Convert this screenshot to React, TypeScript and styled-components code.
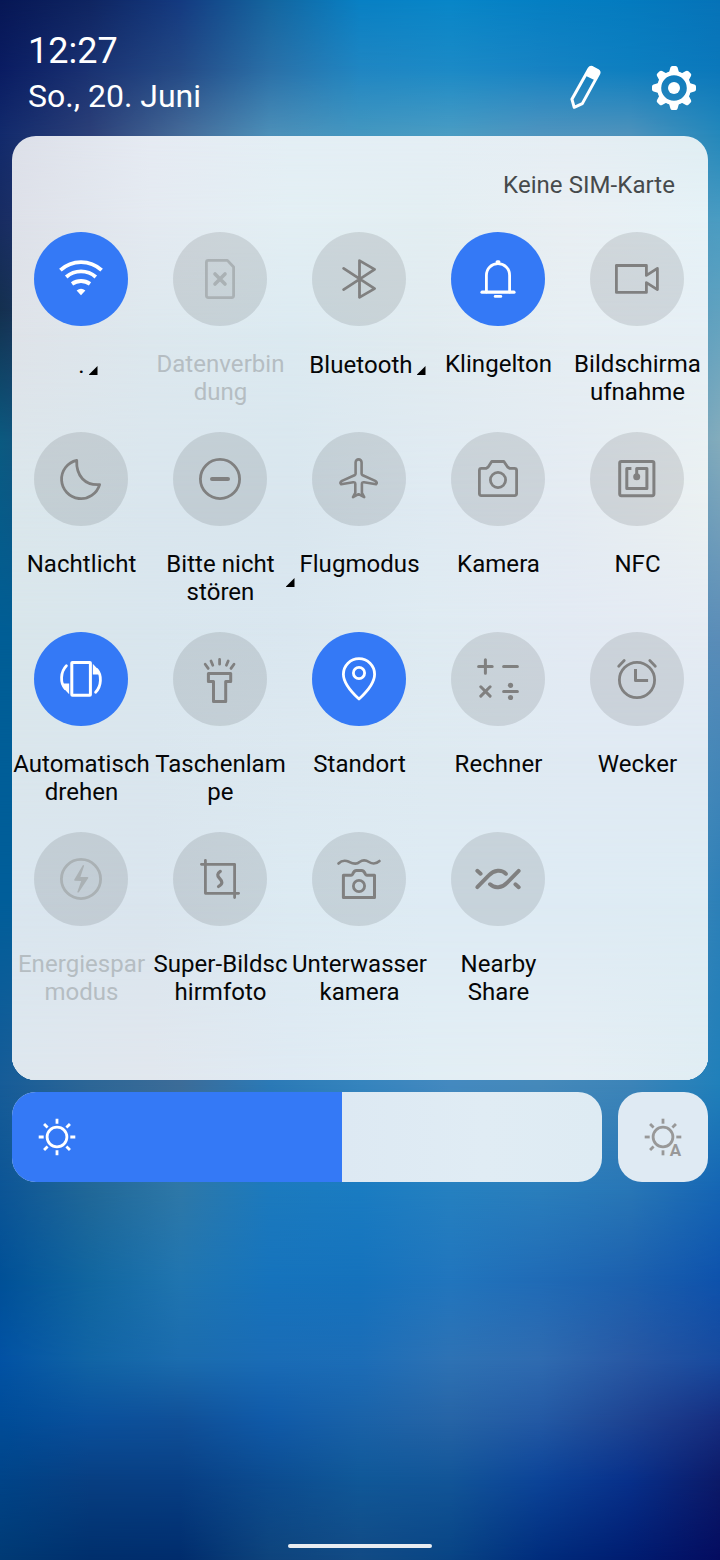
import React from "react";
import styled, { createGlobalStyle } from "styled-components";

const GlobalStyle = createGlobalStyle`
  * { box-sizing: border-box; }
  body { margin: 0; background: #0b4c90; font-family: Roboto, "Liberation Sans", sans-serif; }
`;

/* ---------- colour mesh: horizontal gradients faded into each other ---------- */

type Stop = { y: number; colors: string };

const Screen = styled.main`
  display: grid;
  width: 720px;
  height: 1560px;
  overflow: hidden;
  & > * { grid-area: 1 / 1; }
`;

const MeshBox = styled.div`
  display: grid;
  width: 100%;
  height: 100%;
  min-height: 0;
  isolation: isolate;
`;

const Band = styled.div<{ $from: number; $to: number; $colors: string }>`
  grid-area: 1 / 1;
  background: linear-gradient(to right, ${(p) => p.$colors});
  ${(p) =>
    p.$to > 0 &&
    `mask-image: linear-gradient(to bottom, transparent ${p.$from}px, #000 ${p.$to}px);`}
`;

function Mesh({ stops }: { stops: Stop[] }) {
  return (
    <MeshBox aria-hidden>
      {stops.map((s, i) => (
        <Band key={s.y} $from={i ? stops[i - 1].y : 0} $to={s.y} $colors={s.colors} />
      ))}
    </MeshBox>
  );
}

const wallpaper: Stop[] = [
  { y: 0, colors: "#071755, #0f2561, #143a80, #14659f, #0880c4, #0886c8, #057fc3, #047bbf, #0673b8" },
  { y: 70, colors: "#0a1c62, #1a3272, #244a86, #2a70a8, #2086c2, #1c8ac6, #1783c3, #0e7fc0, #0b78bb" },
  { y: 134, colors: "#122a6c, #2c4078, #456a98, #4c8fb8, #4497c0, #4a9cc3, #4f94be, #4e92bb, #2488bb" },
  { y: 220, colors: "#182c62, #2c4078, #456a98, #4c8fb8, #4497c0, #4a9cc3, #4f94be, #4e92bb, #4a9cc2" },
  { y: 310, colors: "#14304f, #2c4078, #456a98, #4c8fb8, #4497c0, #4a9cc3, #4f94be, #4e92bb, #60a2c0" },
  { y: 440, colors: "#0b5a80, #2c4078, #456a98, #4c8fb8, #4497c0, #4a9cc3, #4f94be, #4e92bb, #84acbc" },
  { y: 640, colors: "#005e96, #005e96, #456a98, #4c8fb8, #4497c0, #4a9cc3, #4f94be, #4e92bb, #5a8cb8" },
  { y: 900, colors: "#005e9a, #005e9a, #456a98, #4c8fb8, #4497c0, #4a9cc3, #4f94be, #4e92bb, #2d80b8" },
  { y: 1085, colors: "#165c98, #2d6696, #3c6c98, #2b79b6, #3584bd, #4489bf, #4589ba, #3c84b8, #2080ba" },
  { y: 1190, colors: "#0c5596, #216898, #2e78a8, #1c7abe, #1a7cc2, #2580c0, #2a7ebc, #2876b6, #1565b4" },
  { y: 1280, colors: "#005097, #1166a0, #2075b0, #1673bc, #1572bc, #2175bd, #206bb6, #1c60ae, #0e52ac" },
  { y: 1360, colors: "#0252a4, #1164a5, #1b6cae, #1a6cb6, #1c6db7, #2e72b4, #2f6bb0, #2858a4, #184a9e" },
  { y: 1420, colors: "#004c98, #0a509c, #105098, #105aa8, #1a62a8, #2664a6, #2359a4, #1e4492, #162d80" },
  { y: 1480, colors: "#004488, #083f82, #083f84, #0c4c90, #105898, #125598, #0c4498, #08308a, #0c1a68" },
  { y: 1560, colors: "#003a74, #002f6c, #002c6c, #0e447c, #124a84, #084484, #002c7c, #001c70, #040c60" },
];

const frost: Stop[] = [
  { y: 0, colors: "#dde0e9, #e6ebf3, #e4eff5, #e5eff5, #e6eef4, #e0eef3" },
  { y: 84, colors: "#dee1e9, #e4eaf1, #e3eff4, #e3eef2, #e9eff3, #e6f2f7" },
  { y: 194, colors: "#dfe3e9, #dde8ee, #dceaf1, #e1ebf0, #e6eef3, #e6eff5" },
  { y: 364, colors: "#dbe7ec, #dae6ee, #d9e6ee, #dfeaf2, #e4ebf2, #ebf1f2" },
  { y: 484, colors: "#d9e6eb, #d9e6ee, #dae7f0, #dfebf2, #e3eaf3, #e6ecf3" },
  { y: 614, colors: "#dae6ec, #dae6ee, #dce8f0, #deeaf1, #e0eaf3, #e0eaf3" },
  { y: 764, colors: "#dae6ef, #dae5ee, #dceaf2, #deebf4, #deebf4, #deecf4" },
  { y: 944, colors: "#dee7ee, #e1e7ee, #dfeaf3, #e2eef4, #e5eef4, #e0edf3" },
];

/* ---------- page parts ---------- */

const Content = styled.div`
  display: flex;
  flex-direction: column;
  align-items: stretch;
  z-index: 1;
`;

const Header = styled.header`
  display: flex;
  justify-content: space-between;
  height: 136px;
  padding: 28px 22px 0 28px;
  color: #fff;
`;

const Clock = styled.div`
  font-size: 36px;
  line-height: 46px;
`;

const DateLine = styled.div`
  font-size: 32px;
  line-height: 44px;
`;

const Actions = styled.div`
  display: flex;
  gap: 40px;
  padding-top: 36px;
  height: 84px;
`;

const ActionIcon = styled.svg`
  width: 48px;
  height: 48px;
`;

const Panel = styled.section`
  display: grid;
  height: 944px;
  margin: 0 12px;
  border-radius: 24px;
  overflow: hidden;
  & > * { grid-area: 1 / 1; }
`;

const PanelBody = styled.div`
  z-index: 1;
`;

const Carrier = styled.div`
  height: 96px;
  padding: 35px 33px 0 0;
  text-align: right;
  font-size: 24px;
  line-height: 29px;
  letter-spacing: 0.06px;
  color: #464a4c;
`;

const TileGrid = styled.div`
  display: grid;
  grid-template-columns: repeat(5, 139px);
  grid-auto-rows: 200px;
  margin-left: -0.5px;
`;

const Tile = styled.div`
  display: flex;
  flex-direction: column;
  align-items: center;
  gap: 24px;
`;

type State = "on" | "off" | "disabled";

const iconColor = { on: "#fff", off: "#808080", disabled: "#aab1b4" };

const Disc = styled.div<{ $state: State }>`
  width: 94px;
  height: 94px;
  border-radius: 50%;
  color: ${(p) => iconColor[p.$state]};
  background: ${(p) => (p.$state === "on" ? "#3479f6" : "rgba(0, 0, 0, 0.1)")};
`;

const Glyph = styled.svg`
  display: block;
  width: 94px;
  height: 94px;
  fill: none;
  stroke: currentColor;
  stroke-width: 2.8;
  stroke-linecap: round;
  stroke-linejoin: round;
  .solid { fill: currentColor; stroke: none; }
`;

const Label = styled.div<{ $state: State; $nudge?: number }>`
  position: relative;
  width: 139px;
  padding-left: 1px;
  font-size: 24px;
  line-height: 28px;
  letter-spacing: 0.05px;
  text-align: center;
  white-space: pre;
  color: ${(p) => (p.$state === "disabled" ? "#b5bdc2" : "#050607")};
  ${(p) => p.$nudge && `padding: 1px 0 0 ${p.$nudge}px;`}
`;

const Corner = styled.i<{ $x: number; $y: number }>`
  position: absolute;
  left: ${(p) => p.$x}px;
  top: ${(p) => p.$y}px;
  width: 9px;
  height: 9px;
  background: #000;
  clip-path: polygon(100% 0, 100% 100%, 0 100%);
`;

const BrightnessRow = styled.div`
  display: flex;
  gap: 16px;
  margin: 12px 12px 0;
  height: 90px;
`;

const Slider = styled.div`
  display: flex;
  flex: 1;
  border-radius: 24px;
  overflow: hidden;
  background: linear-gradient(to right, #dde9f3 56%, #e0ecf4 80%, #deebf3);
`;

const SliderFill = styled.div`
  display: flex;
  align-items: center;
  padding-left: 25px;
  background: #3479f6;
  color: #fff;
`;

const AutoButton = styled.div`
  display: flex;
  align-items: center;
  justify-content: center;
  width: 90px;
  border-radius: 24px;
  background: #dfeaf3;
  color: #989898;
`;

const SunIcon = styled.svg`
  width: 40px;
  height: 40px;
  overflow: visible;
  fill: none;
  stroke: currentColor;
  stroke-width: 2.8;
  text {
    fill: currentColor;
    stroke: none;
    font: 700 17px Roboto, sans-serif;
  }
`;

const HomeBar = styled.div`
  align-self: center;
  width: 144px;
  height: 4px;
  margin-top: 362px;
  border-radius: 2px;
  background: #e9edf2;
`;

/* ---------- icons (origin in the centre of the disc) ---------- */

const icons = {
  wifi: (
    <>
      <g strokeWidth="3.8" strokeLinecap="butt">
        <path d="M-20.6 -8.8A30.3 30.3 0 0 1 20.6 -8.8" />
        <path d="M-14.8 -2A22.5 22.5 0 0 1 14.8 -2" />
        <path d="M-9 4.9A15.5 15.5 0 0 1 9 4.9" />
      </g>
      <path className="solid" d="M-4.4 11.4Q0 8 4.4 11.4L0 16.2Z" />
    </>
  ),
  sim: (
    <>
      <path d="M-11.7 -18.6H7.4L13.6 -12V16.6Q13.6 18.6 11.6 18.6H-11.6Q-13.6 18.6 -13.6 16.6V-16.6Q-13.6 -18.6 -11.7 -18.6Z" />
      <path strokeWidth="3.6" d="M-5 -5L5 5M5 -5L-5 5" />
    </>
  ),
  bluetooth: <path d="M-15.4 -10.6L15.6 9.6L.5 18.4V-18.4L15.6 -9.6L-15.4 10.6" />,
  bell: (
    <>
      <path d="M-11.6 13V-3.5C-11.6 -10.5 -6.5 -15.3 0 -15.3S11.6 -10.5 11.6 -3.5V13" />
      <path strokeWidth="3.2" d="M-16 13.2H16" />
      <path strokeWidth="3.2" d="M-.8 -17.2H.8" />
      <path strokeWidth="2.8" d="M-2.8 17.4H2.8" />
    </>
  ),
  video: <path d="M9.4 -3.6V-13.5H-20.6V13.4H9.4V3.6L20.4 10.6V-10.6Z" />,
  moon: <path d="M-4.3 -18.7C-5 -3 4 6.5 18.6 5.6A19.4 19.4 0 1 1 -4.3 -18.7Z" />,
  dnd: (
    <>
      <circle r="19.6" />
      <path strokeWidth="4" d="M-8 0H8" />
    </>
  ),
  plane: (
    <path
      strokeWidth="2.6"
      d="M-3.4 -16.6A3 3 0 0 1 2.6 -16.6V-5.3Q2.6 -4.3 3.7 -3.7L16.2 1.9Q18.9 3.8 17.1 5.2L5.1 3.3Q2.9 3 2.9 5V13.8L5.2 18.2L-.4 15.2L-6 18.2L-3.7 13.8V5Q-3.7 3 -5.9 3.3L-17.9 5.2Q-19.7 3.8 -17 1.9L-4.5 -3.7Q-3.4 -4.3 -3.4 -5.3Z"
    />
  ),
  camera: (
    <>
      <path d="M-16.6 -10.6H-11.8L-9.8 -12L-6.3 -17.5H5.9L9.6 -12L11.6 -10.6H16.4Q18.6 -10.6 18.6 -8.6V14.6Q18.6 16.6 16.4 16.6H-16.6Q-18.6 16.6 -18.6 14.6V-8.6Q-18.6 -10.6 -16.6 -10.6Z" />
      <circle cy="1" r="7.6" />
    </>
  ),
  nfc: (
    <>
      <rect x="-17.3" y="-17.5" width="34.2" height="34.2" rx="1.6" strokeWidth="3" />
      <path strokeWidth="3" strokeLinecap="butt" d="M-5.6 -10.5H-10.2V9.6H9.9V-10.5H-.3V-3" />
      <circle className="solid" cx="-.3" cy="-2.3" r="3.5" />
    </>
  ),
  rotate: (
    <>
      <rect x="-9.2" y="-16.5" width="18.6" height="32.8" rx=".6" strokeWidth="3" />
      {[0, 180].map((a) => (
        <g key={a} transform={`rotate(${a})`}>
          <path d="M-14.6 -13.2C-20.6 -7 -21 4 -15.8 9.6" />
          <path className="solid" d="M-17.8 4.4H-11.8V15.2L-17.2 9.6Z" />
        </g>
      ))}
    </>
  ),
  torch: (
    <>
      <path d="M-.4 -19.6V-14.8M-9 -18L-7.2 -13.8M8.2 -18L6.4 -13.8M-14.8 -14.8L-11.8 -10.6M14 -14.8L11 -10.6" />
      <path strokeWidth="3" d="M-11.6 -5.5H10.7V2.6H5.7V22.4H-6.5V2.6H-11.6Z" />
    </>
  ),
  pin: (
    <>
      <path d="M0 20C-8.5 12.2 -15.6 4 -15.6 -4.8A15.6 15.6 0 0 1 15.6 -4.8C15.6 4 8.5 12.2 0 20Z" />
      <circle cy="-6" r="5.6" />
    </>
  ),
  calc: (
    <>
      <path strokeWidth="3" d="M-19.4 -12.5H-5.8M-12.6 -19.3V-5.7M5.6 -12.5H19.4M5.6 12.4H19.4M-17.2 7.8L-7.9 17.1M-7.9 7.8L-17.2 17.1" />
      <circle className="solid" cx="12.5" cy="6.3" r="2.6" />
      <circle className="solid" cx="12.5" cy="18.5" r="2.6" />
    </>
  ),
  alarm: (
    <>
      <circle cy="1" r="17.6" />
      <path strokeWidth="3" strokeLinecap="square" d="M-1.5 -8.4V1.5H9.6" />
      <path d="M-18.3 -12.8L-12.8 -18.4M18.3 -12.8L12.8 -18.4" />
    </>
  ),
  power: (
    <>
      <circle r="19.6" />
      <path className="solid" d="M1.8 -13.8L-6.8 .8Q-7 1.7 -6 1.7L.2 2L-3.7 13Q-3 14.2 -2 13L7.3 -.9Q7.6 -1.9 6.4 -2L-.6 -2.1L3.1 -13.3Q2.6 -14.5 1.8 -13.8Z" />
    </>
  ),
  shot: (
    <>
      <path d="M-14.6 -18.6V14.3H18.6M-18.6 -14.7H14.6V18.6" />
      <path strokeWidth="3.2" d="M.3 -7.6C-3 -5.5 -2.8 -3.4 -.8 -1.1C2.5 2.5 3.2 4.6 -1.5 7.5" />
    </>
  ),
  underwater: (
    <>
      <path strokeWidth="2.6" d="M-20.5 -15.5Q-16 -20 -10 -17.2Q-3 -13.6 .5 -17Q5 -20.2 10 -17Q15.5 -13.5 20.5 -18" />
      <path strokeWidth="3" d="M-15.6 -3.7H-8Q-7 -3.8 -6.4 -4.8Q-4.8 -8.4 -2.6 -8.4H2.6Q4.8 -8.4 6.4 -4.8Q7 -3.8 8 -3.7H15.5V18.5H-15.6Z" />
      <circle cy="7" r="5.6" />
    </>
  ),
  nearby: (
    <g strokeWidth="3.9">
      <path d="M-20.7 -8.2L-17.4 -5.2M20.7 8.2L17.4 5.2" />
      <path d="M-20.7 8.2L-9.2 -3.6C-4 -9.2 3.5 -9.8 8 -5.2" />
      <path d="M20.7 -8.2L9.2 3.6C4 9.2 -3.5 9.8 -8 5.2" />
    </g>
  ),
};

type TileSpec = {
  icon: keyof typeof icons;
  label: string;
  state?: State;
  corner?: [number, number];
  nudge?: number;
};

const tiles: TileSpec[] = [
  { icon: "wifi", label: ".", state: "on", corner: [77, 16], nudge: 1 },
  { icon: "sim", label: "Datenverbin\ndung", state: "disabled" },
  { icon: "bluetooth", label: "Bluetooth", corner: [127, 16], nudge: 4 },
  { icon: "bell", label: "Klingelton", state: "on" },
  { icon: "video", label: "Bildschirma\nufnahme" },
  { icon: "moon", label: "Nachtlicht" },
  { icon: "dnd", label: "Bitte nicht\nstören", corner: [135, 28] },
  { icon: "plane", label: "Flugmodus" },
  { icon: "camera", label: "Kamera" },
  { icon: "nfc", label: "NFC" },
  { icon: "rotate", label: "Automatisch\ndrehen", state: "on" },
  { icon: "torch", label: "Taschenlam\npe" },
  { icon: "pin", label: "Standort", state: "on" },
  { icon: "calc", label: "Rechner" },
  { icon: "alarm", label: "Wecker" },
  { icon: "power", label: "Energiespar\nmodus", state: "disabled" },
  { icon: "shot", label: "Super-Bildsc\nhirmfoto" },
  { icon: "underwater", label: "Unterwasser\nkamera" },
  { icon: "nearby", label: "Nearby\nShare" },
];

function QuickTile({ icon, label, state = "off", corner, nudge }: TileSpec) {
  return (
    <Tile>
      <Disc $state={state}>
        <Glyph viewBox="-47 -47 94 94">{icons[icon]}</Glyph>
      </Disc>
      <Label $state={state} $nudge={nudge}>
        {label}
        {corner && <Corner $x={corner[0]} $y={corner[1]} />}
      </Label>
    </Tile>
  );
}

function Sun({ auto }: { auto?: boolean }) {
  const angles = [0, 45, 90, 135, 180, 225, 270, 315].filter((a) => !auto || a !== 45);
  return (
    <SunIcon viewBox="-20 -20 40 40">
      <circle r="9.9" />
      {angles.map((a) => (
        <path key={a} d="M13.3 0H18.3" transform={`rotate(${a})`} />
      ))}
      {auto && <text x="6.8" y="18.7">A</text>}
    </SunIcon>
  );
}

export default function App() {
  return (
    <>
      <GlobalStyle />
      <Screen>
        <Mesh stops={wallpaper} />
        <Content>
          <Header>
            <div>
              <Clock>12:27</Clock>
              <DateLine>So., 20. Juni</DateLine>
            </div>
            <Actions>
              <ActionIcon viewBox="562 64 48 48">
                <path
                  d="M571.9 99.2L589.2 68.6Q590.3 66.8 592.2 67.5L597.8 70.6Q599.6 71.8 598.8 73.6L582.3 103.6L574.2 107.3Z"
                  fill="none"
                  stroke="#fff"
                  strokeWidth="3"
                  strokeLinejoin="round"
                />
                <path d="M589.2 68.6L592.2 67L598.8 71.5L599 73.6L595.4 80.4L585 75.4Z" fill="#fff" />
              </ActionIcon>
              <ActionIcon viewBox="-24 -24 48 48">
                <circle r="14.9" fill="none" stroke="#fff" strokeWidth="4.2" />
                {[0, 45, 90, 135, 180, 225, 270, 315].map((a) => (
                  <path
                    key={a}
                    transform={`rotate(${a})`}
                    d="M-5 -15.4L-3.6 -20.4Q-3.2 -22 -1.6 -22H1.6Q3.2 -22 3.6 -20.4L5 -15.4Z"
                    fill="#fff"
                  />
                ))}
                <circle r="6" fill="#fff" />
              </ActionIcon>
            </Actions>
          </Header>
          <Panel>
            <Mesh stops={frost} />
            <PanelBody>
              <Carrier>Keine SIM-Karte</Carrier>
              <TileGrid>
                {tiles.map((t) => (
                  <QuickTile key={t.icon} {...t} />
                ))}
              </TileGrid>
            </PanelBody>
          </Panel>
          <BrightnessRow>
            <Slider>
              <SliderFill style={{ width: `${(330 / 590) * 100}%` }}>
                <Sun />
              </SliderFill>
            </Slider>
            <AutoButton>
              <Sun auto />
            </AutoButton>
          </BrightnessRow>
          <HomeBar />
        </Content>
      </Screen>
    </>
  );
}
